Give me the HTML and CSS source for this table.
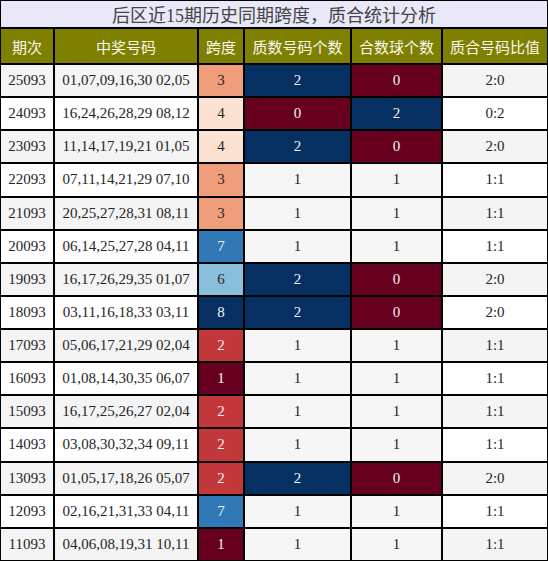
FILE: index.html
```html
<!DOCTYPE html>
<html lang="zh">
<head>
  <meta charset="utf-8"/>
  <title>后区近15期历史同期跨度，质合统计分析</title>
  <link rel="stylesheet" href="styles.css">
</head>
<body>
  <table class="stats">
    <colgroup>
      <col class="c-issue"><col class="c-nums"><col class="c-span"><col class="c-prime"><col class="c-comp"><col class="c-ratio">
    </colgroup>
    <thead>
      <tr><th class="title" colspan="6">后区近15期历史同期跨度，质合统计分析</th></tr>
      <tr class="head">
        <th>期次</th><th>中奖号码</th><th>跨度</th><th>质数号码个数</th><th>合数球个数</th><th>质合号码比值</th>
      </tr>
    </thead>
    <tbody>
      <tr><td>25093</td><td>01,07,09,16,30 02,05</td><td class="s3">3</td><td class="v2">2</td><td class="v0">0</td><td>2:0</td></tr>
      <tr><td>24093</td><td>16,24,26,28,29 08,12</td><td class="s4">4</td><td class="v0">0</td><td class="v2">2</td><td>0:2</td></tr>
      <tr><td>23093</td><td>11,14,17,19,21 01,05</td><td class="s4">4</td><td class="v2">2</td><td class="v0">0</td><td>2:0</td></tr>
      <tr><td>22093</td><td>07,11,14,21,29 07,10</td><td class="s3">3</td><td class="v1">1</td><td class="v1">1</td><td>1:1</td></tr>
      <tr><td>21093</td><td>20,25,27,28,31 08,11</td><td class="s3">3</td><td class="v1">1</td><td class="v1">1</td><td>1:1</td></tr>
      <tr><td>20093</td><td>06,14,25,27,28 04,11</td><td class="s7">7</td><td class="v1">1</td><td class="v1">1</td><td>1:1</td></tr>
      <tr><td>19093</td><td>16,17,26,29,35 01,07</td><td class="s6">6</td><td class="v2">2</td><td class="v0">0</td><td>2:0</td></tr>
      <tr><td>18093</td><td>03,11,16,18,33 03,11</td><td class="s8">8</td><td class="v2">2</td><td class="v0">0</td><td>2:0</td></tr>
      <tr><td>17093</td><td>05,06,17,21,29 02,04</td><td class="s2">2</td><td class="v1">1</td><td class="v1">1</td><td>1:1</td></tr>
      <tr><td>16093</td><td>01,08,14,30,35 06,07</td><td class="s1">1</td><td class="v1">1</td><td class="v1">1</td><td>1:1</td></tr>
      <tr><td>15093</td><td>16,17,25,26,27 02,04</td><td class="s2">2</td><td class="v1">1</td><td class="v1">1</td><td>1:1</td></tr>
      <tr><td>14093</td><td>03,08,30,32,34 09,11</td><td class="s2">2</td><td class="v1">1</td><td class="v1">1</td><td>1:1</td></tr>
      <tr><td>13093</td><td>01,05,17,18,26 05,07</td><td class="s2">2</td><td class="v2">2</td><td class="v0">0</td><td>2:0</td></tr>
      <tr><td>12093</td><td>02,16,21,31,33 04,11</td><td class="s7">7</td><td class="v1">1</td><td class="v1">1</td><td>1:1</td></tr>
      <tr><td>11093</td><td>04,06,08,19,31 10,11</td><td class="s1">1</td><td class="v1">1</td><td class="v1">1</td><td>1:1</td></tr>
    </tbody>
  </table>
</body>
</html>
```

FILE: styles.css
```css
body {
  margin: 0;
  padding: 0;
  background: #fff;
  font-family: "Liberation Serif", "Noto Sans CJK SC", serif;
  color: #262626;
}
.stats {
  width: 548px;
  table-layout: fixed;
  border-collapse: separate;
  border-spacing: 0;
  border-top: 1px solid #000;
  border-left: 1px solid #000;
}
.c-issue { width: 54px; }
.c-nums { width: 144px; }
.c-span { width: 46px; }
.c-prime { width: 107px; }
.c-comp { width: 91px; }
.c-ratio { width: 105px; }

.stats th,
.stats td {
  padding: 0;
  text-align: center;
  white-space: nowrap;
  border-right: 2px solid #000;
  border-bottom: 2px solid #000;
  font-weight: normal;
}
.stats tr > :last-child {
  border-right-width: 1px;
}
.stats tbody tr:last-child td {
  border-bottom-width: 1px;
}

.title {
  height: 26px;
  background: #e8e8f8;
  color: #444;
  font-size: 18px;
}
.head th {
  height: 34px;
  background: #808000;
  color: #f8f8f0;
  font-size: 15px;
}
.stats td {
  height: 31.13px;
  font-size: 15px;
}
.stats tbody tr {
  background: #fff;
}
.stats tbody tr:nth-child(odd) {
  background: #f4f4f4;
}

/* count cells */
.v0 { background: #67001f; color: #f2f2f2; }
.v1 { background: #f5f6f5; color: #262626; }
.v2 { background: #053061; color: #f2f2f2; }

/* span cells */
.s1 { background: #67001f; color: #f2f2f2; }
.s2 { background: #c2373a; color: #f2f2f2; }
.s3 { background: #f09d7c; color: #262626; }
.s4 { background: #fbe2d3; color: #262626; }
.s6 { background: #88bfdb; color: #262626; }
.s7 { background: #3079b6; color: #f2f2f2; }
.s8 { background: #053061; color: #f2f2f2; }
```
